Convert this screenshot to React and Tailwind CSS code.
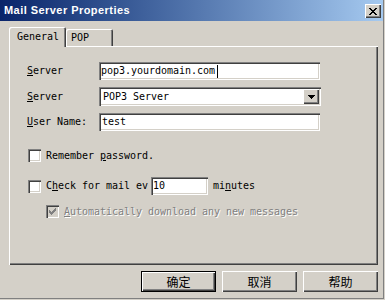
import React from "react";

const mono = "font-['DejaVu_Sans_Mono',monospace] text-[10px] tracking-[-0.02px] leading-[14px]";
const raised = "shadow-[inset_1px_1px_#ffffff,inset_-1px_-1px_#404040,inset_-2px_-2px_#808080]";
const sunken = "shadow-[inset_1px_1px_#808080,inset_2px_2px_#404040,inset_-1px_-1px_#ffffff,inset_-2px_-2px_#d4d0c8]";

function CloseGlyph() {
  const rows = ["XX....XX", ".XX..XX.", "..XXXX..", "...XX...", "..XXXX..", ".XX..XX.", "XX....XX"];
  return (
    <svg width="8" height="7" viewBox="0 0 8 7" shapeRendering="crispEdges">
      {rows.flatMap((r, y) =>
        r.split("").map((c, x) => (c === "X" ? <rect key={x + "-" + y} x={x} y={y} width="1" height="1" fill="#000" /> : null))
      )}
    </svg>
  );
}

function CheckGlyph({ color }) {
  const rows = ["......X", ".....XX", "X...XXX", "XX.XXX.", "XXXXX..", ".XXX...", "..X...."];
  return (
    <svg width="7" height="7" viewBox="0 0 7 7" shapeRendering="crispEdges">
      {rows.flatMap((r, y) =>
        r.split("").map((c, x) => (c === "X" ? <rect key={x + "-" + y} x={x} y={y} width="1" height="1" fill={color} /> : null))
      )}
    </svg>
  );
}

function Checkbox({ checked, disabled }) {
  return (
    <div className={`w-[13px] h-[13px] shrink-0 flex items-center justify-center ${disabled ? "bg-[#d4d0c8]" : "bg-white"} ${sunken}`}>
      {checked && <CheckGlyph color={disabled ? "#808080" : "#000"} />}
    </div>
  );
}

function Btn({ children, def }) {
  return (
    <div className={`w-[75px] h-[21px] flex items-center justify-center font-['Noto_Sans_CJK_SC',sans-serif] text-[12px] leading-none text-black ${def ? "border border-black" : ""} ${raised}`}>
      {children}
    </div>
  );
}

export default function App() {
  return (
    <div className="w-[385px] h-[300px] bg-[#d4d0c8] flex flex-col overflow-hidden shadow-[inset_-1px_-1px_#d4d0c8,inset_-2px_-2px_#808080]">
      {/* Title bar */}
      <div className="h-[21px] mr-[2px] flex justify-between bg-linear-to-r from-[#0a246a] to-[#a6caf0] pl-[4px] pr-[2px]">
        <div className="self-center font-['Liberation_Sans',Arial,sans-serif] font-bold text-[11px] tracking-[0.45px] text-white leading-none">
          Mail Server Properties
        </div>
        <div className={`mt-[4px] w-[16px] h-[14px] bg-[#d4d0c8] flex items-center justify-center ${raised}`}>
          <CloseGlyph />
        </div>
      </div>

      {/* Tabs */}
      <div className={`mt-[6px] ml-[9px] h-[19px] flex items-end ${mono} text-black`}>
        <div className="relative z-10 -mb-[1px] w-[57px] h-[20px] bg-[#d4d0c8] pl-[8px] pb-[1px] flex items-center rounded-t-[2px] shadow-[inset_1px_1px_#ffffff,inset_-1px_0_#404040,inset_-2px_0_#808080]">
          General
        </div>
        <div className="w-[47px] h-[17px] pl-[5px] flex items-center rounded-t-[2px] shadow-[inset_1px_1px_#ffffff,inset_-1px_0_#404040,inset_-2px_0_#808080]">
          POP
        </div>
      </div>

      {/* Panel */}
      <div className={`ml-[9px] w-[369px] h-[219px] pt-[16px] pl-[18px] flex flex-col ${raised} ${mono} text-black`}>
        <div className="h-[18px] flex items-center">
          <div className="w-[72px]"><span className="underline">S</span>erver</div>
          <div className={`w-[221px] h-[18px] bg-white pl-[2px] flex items-center ${sunken}`}>
            pop3.yourdomain.com<span className="w-[1px] h-[13px] bg-black ml-[2px]" />
          </div>
        </div>
        <div className="mt-[7px] h-[19px] flex items-center">
          <div className="w-[72px]"><span className="underline">S</span>erver</div>
          <div className={`w-[222px] h-[19px] bg-white pl-[4px] flex items-center justify-between pr-[2px] ${sunken}`}>
            <span>POP3 Server</span>
            <div className={`w-[16px] h-[15px] bg-[#d4d0c8] flex items-center justify-center ${raised}`}>
              <svg width="7" height="4" viewBox="0 0 7 4" shapeRendering="crispEdges">
                <rect x="0" y="0" width="7" height="1" fill="#000" />
                <rect x="1" y="1" width="5" height="1" fill="#000" />
                <rect x="2" y="2" width="3" height="1" fill="#000" />
                <rect x="3" y="3" width="1" height="1" fill="#000" />
              </svg>
            </div>
          </div>
        </div>
        <div className="mt-[7px] h-[18px] flex items-center">
          <div className="w-[72px]"><span className="underline">U</span>ser Name:</div>
          <div className={`w-[221px] h-[18px] bg-white pl-[3px] flex items-center ${sunken}`}>test</div>
        </div>

        <div className="mt-[18px] h-[13px] pl-[1px] flex items-center gap-[5px]">
          <Checkbox />
          <span>Remember <span className="underline">p</span>assword.</span>
        </div>

        <div className="mt-[15px] h-[18px] pl-[1px] flex items-center">
          <Checkbox />
          <div className="ml-[5px] w-[105px] overflow-hidden whitespace-nowrap">C<span className="underline">h</span>eck for mail ev</div>
          <div className={`w-[57px] h-[18px] bg-white pl-[2px] flex items-center ${sunken}`}>10</div>
          <div className="ml-[5px]">mi<span className="underline">n</span>utes</div>
        </div>

        <div className="mt-[10px] h-[13px] pl-[19px] flex items-center gap-[5px]">
          <Checkbox checked disabled />
          <span className="text-[#808080] [text-shadow:1px_1px_#ffffff]">
            <span className="underline">A</span>utomatically download any new messages
          </span>
        </div>
      </div>

      {/* Buttons */}
      <div className="mt-[6px] ml-[9px] w-[369px] flex justify-end gap-[6px]">
        <Btn def>确定</Btn>
        <Btn>取消</Btn>
        <Btn>帮助</Btn>
      </div>
    </div>
  );
}
